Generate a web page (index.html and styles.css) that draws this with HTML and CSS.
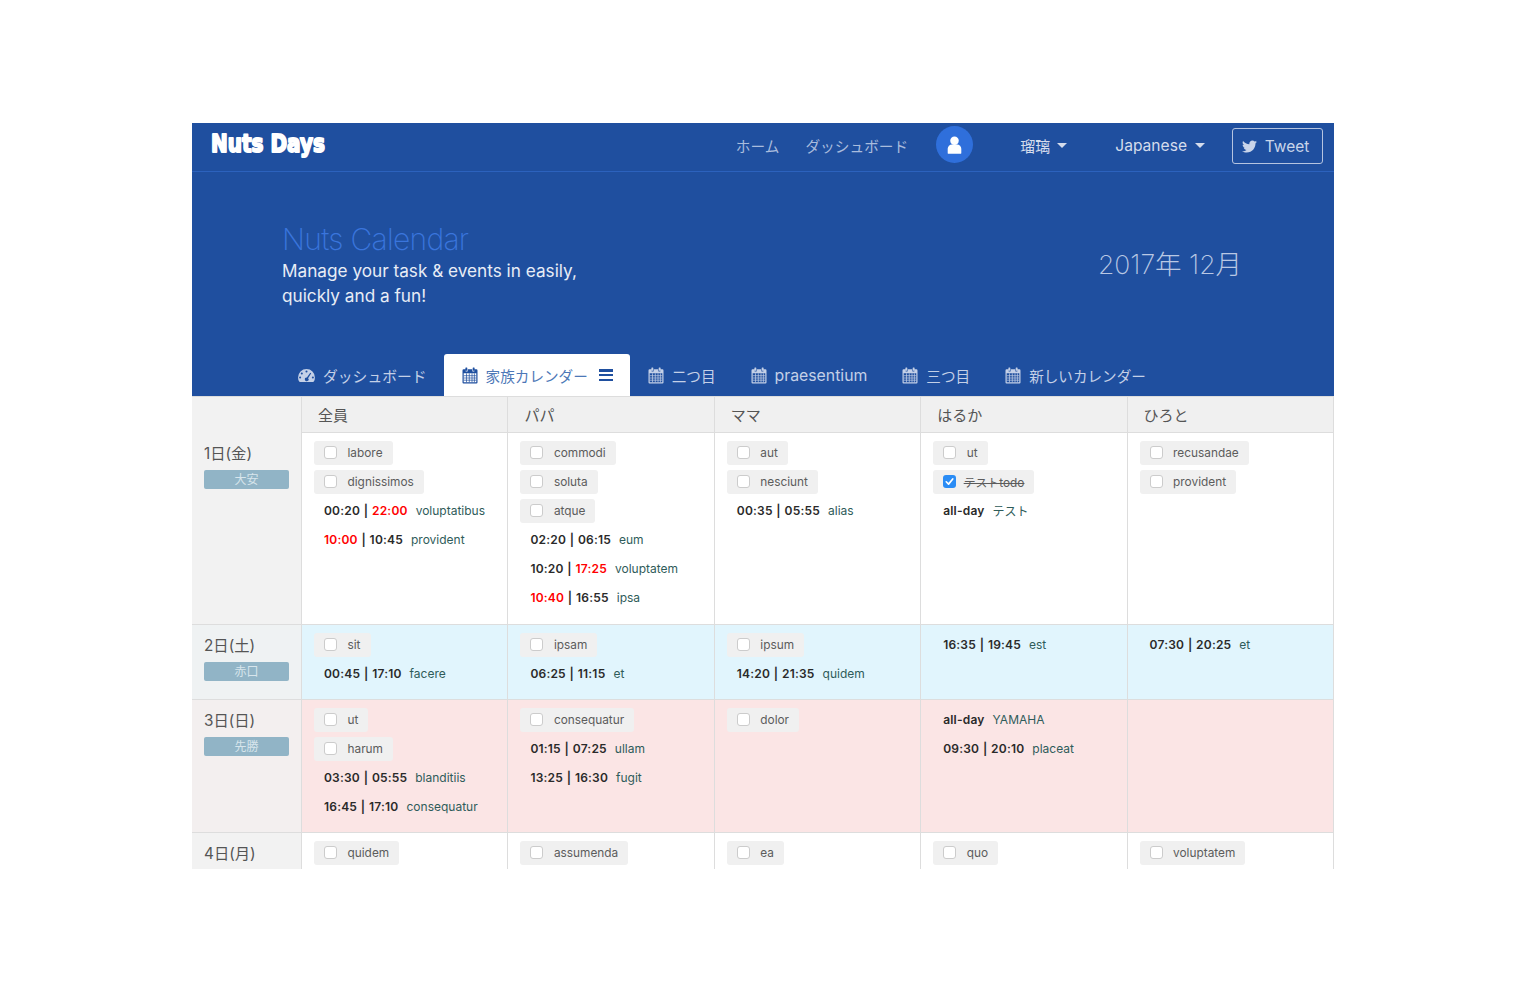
FILE: index.html
```html
<!DOCTYPE html>
<html lang="ja">
<head>
<meta charset="utf-8">
<title>Nuts Days</title>
<link rel="stylesheet" href="styles.css">
</head>
<body>
<svg class="defs" width="0" height="0" aria-hidden="true">
  <symbol id="cal" viewBox="0 0 16 17" preserveAspectRatio="none">
    <path fill="currentColor" fill-rule="evenodd" d="M1.600 2.300H3.400V3.400a1.200 1.200 0 0 0 2.400 0V2.300h4.400V3.400a1.200 1.200 0 0 0 2.400 0V2.300h1.800A1.100 1.100 0 0 1 15.500 3.400V15.400A1.100 1.100 0 0 1 14.400 16.500H1.600A1.100 1.100 0 0 1 .5 15.400V3.400A1.100 1.100 0 0 1 1.600 2.300ZM1.700 6.300V15.300H14.300V6.300ZM3.900.5h.9a.5.500 0 0 1 .5.5V3.300a.5.500 0 0 1-.5.5H3.900a.5.500 0 0 1-.5-.5V1a.5.500 0 0 1 .5-.5ZM11.200.5h.9a.5.500 0 0 1 .5.5V3.300a.5.500 0 0 1-.5.5h-.9a.5.500 0 0 1-.5-.5V1a.5.500 0 0 1 .5-.5Z"/>
    <path fill="none" stroke="currentColor" stroke-width=".7" d="M4.500 6.300V15.300M7.300 6.300V15.300M10 6.300V15.300M12.400 6.300V15.300M1.700 8.700H14.300M1.700 11H14.300M1.700 13.200H14.300"/>
  </symbol>
  <symbol id="check" viewBox="0 0 14 14">
    <path fill="none" stroke="#fff" stroke-width="1.800" stroke-linecap="round" stroke-linejoin="round" d="M3.500 7.300 6 9.800 10.500 4.300"/>
  </symbol>
</svg>
<div class="app">
  <div class="top">
    <nav class="nav">
      <svg class="logo" width="118" height="30" role="img" aria-label="Nuts Days"><text class="logo-text" x="2" y="22" textLength="114" lengthAdjust="spacingAndGlyphs">Nuts Days</text></svg>
      <div class="nav-right">
        <a class="nav-link nav-home">ホーム</a>
        <a class="nav-link nav-dash">ダッシュボード</a>
        <span class="avatar">
          <svg viewBox="0 0 20 22" width="17" height="19"><circle cx="10" cy="6.500" r="5" fill="#fff"/><path fill="#fff" d="M2 21V16a5 5 0 0 1 5-5h6a5 5 0 0 1 5 5v5a1 1 0 0 1-1 1H3a1 1 0 0 1-1-1Z"/></svg>
        </span>
        <a class="nav-menu nav-user">瑠璃<i class="caret"></i></a>
        <a class="nav-menu nav-lang">Japanese<i class="caret"></i></a>
        <a class="tweet">
          <svg viewBox="0 0 512 512" width="15" height="15"><path fill="currentColor" d="M459.370 151.716c.325 4.548.325 9.097.325 13.645 0 138.720-105.583 298.558-298.558 298.558-59.452 0-114.680-17.219-161.137-47.106 8.447.974 16.568 1.299 25.340 1.299 49.055 0 94.213-16.568 130.274-44.832-46.132-.975-84.792-31.188-98.112-72.772 6.498.974 12.995 1.624 19.818 1.624 9.421 0 18.843-1.300 27.614-3.573-48.081-9.747-84.143-51.980-84.143-102.985v-1.299c13.969 7.797 30.214 12.670 47.431 13.319-28.264-18.843-46.781-51.005-46.781-87.391 0-19.492 5.197-37.360 14.294-52.954 51.655 63.675 129.300 105.258 216.365 109.807-1.624-7.797-2.599-15.918-2.599-24.040 0-57.828 46.782-104.934 104.934-104.934 30.213 0 57.502 12.670 76.670 33.137 23.715-4.548 46.456-13.320 66.599-25.340-7.798 24.366-24.366 44.833-46.132 57.827 21.117-2.273 41.584-8.122 60.426-16.243-14.292 20.791-32.161 39.308-52.628 54.253z"/></svg>
          Tweet
        </a>
      </div>
    </nav>
    <header class="hero">
      <div class="hero-copy">
        <h1 class="hero-title">Nuts Calendar</h1>
        <p class="hero-sub">Manage your task &amp; events in easily,<br>quickly and a fun!</p>
      </div>
      <div class="hero-month">2017年 12月</div>
    </header>
    <div class="tabs">
      <a class="tab tab-first">
        <svg class="tab-icon" viewBox="0 0 18 16" width="17" height="15"><path fill="currentColor" fill-rule="evenodd" d="M9 1a9 9 0 0 0-9 9 8.700 8.700 0 0 0 1.200 4.500 1 1 0 0 0 .8.500H16a1 1 0 0 0 .8-.500A8.700 8.700 0 0 0 18 10a9 9 0 0 0-9-9ZM9 2.600a1.100 1.100 0 1 1 0 2.200 1.100 1.100 0 0 1 0-2.200ZM4 4.700a1.100 1.100 0 1 1 0 2.200 1.100 1.100 0 0 1 0-2.200ZM2.200 9a1.100 1.100 0 1 1 0 2.200 1.100 1.100 0 0 1 0-2.200ZM15.800 9a1.100 1.100 0 1 1 0 2.200 1.100 1.100 0 0 1 0-2.200ZM13 5l1 .600-3.300 5.200a2 2 0 1 1-1.300-.7Z"/></svg>
        ダッシュボード
      </a>
      <a class="tab tab-active">
        <svg class="tab-icon" width="16" height="17"><use href="#cal"/></svg>
        家族カレンダー
        <span class="burger"><i></i><i></i><i></i></span>
      </a>
      <a class="tab"><svg class="tab-icon" width="16" height="17"><use href="#cal"/></svg>二つ目</a>
      <a class="tab tab-latin"><svg class="tab-icon" width="16" height="17"><use href="#cal"/></svg>praesentium</a>
      <a class="tab"><svg class="tab-icon" width="16" height="17"><use href="#cal"/></svg>三つ目</a>
      <a class="tab"><svg class="tab-icon" width="16" height="17"><use href="#cal"/></svg>新しいカレンダー</a>
    </div>
  </div>

  <div class="cal">
    <div class="row row-head">
      <div class="cell day-cell"></div>
      <div class="cell">全員</div><div class="cell">パパ</div><div class="cell">ママ</div><div class="cell">はるか</div><div class="cell">ひろと</div>
    </div>

    <div class="row row-1">
      <div class="cell day-cell"><div class="day">1日(金)</div><div class="rokuyo">大安</div></div>
      <div class="cell">
        <label class="todo"><span class="box"></span>labore</label>
        <label class="todo"><span class="box"></span>dignissimos</label>
        <div class="event"><b>00:20 | <em>22:00</em></b><span>voluptatibus</span></div>
        <div class="event"><b><em>10:00</em> | 10:45</b><span>provident</span></div>
      </div>
      <div class="cell">
        <label class="todo"><span class="box"></span>commodi</label>
        <label class="todo"><span class="box"></span>soluta</label>
        <label class="todo"><span class="box"></span>atque</label>
        <div class="event"><b>02:20 | 06:15</b><span>eum</span></div>
        <div class="event"><b>10:20 | <em>17:25</em></b><span>voluptatem</span></div>
        <div class="event"><b><em>10:40</em> | 16:55</b><span>ipsa</span></div>
      </div>
      <div class="cell">
        <label class="todo"><span class="box"></span>aut</label>
        <label class="todo"><span class="box"></span>nesciunt</label>
        <div class="event"><b>00:35 | 05:55</b><span>alias</span></div>
      </div>
      <div class="cell">
        <label class="todo"><span class="box"></span>ut</label>
        <label class="todo todo-done"><span class="box box-on"><svg width="13" height="13"><use href="#check"/></svg></span><s>テストtodo</s></label>
        <div class="event"><b>all-day</b><span>テスト</span></div>
      </div>
      <div class="cell">
        <label class="todo"><span class="box"></span>recusandae</label>
        <label class="todo"><span class="box"></span>provident</label>
      </div>
    </div>

    <div class="row row-sat">
      <div class="cell day-cell"><div class="day">2日(土)</div><div class="rokuyo">赤口</div></div>
      <div class="cell">
        <label class="todo"><span class="box"></span>sit</label>
        <div class="event"><b>00:45 | 17:10</b><span>facere</span></div>
      </div>
      <div class="cell">
        <label class="todo"><span class="box"></span>ipsam</label>
        <div class="event"><b>06:25 | 11:15</b><span>et</span></div>
      </div>
      <div class="cell">
        <label class="todo"><span class="box"></span>ipsum</label>
        <div class="event"><b>14:20 | 21:35</b><span>quidem</span></div>
      </div>
      <div class="cell">
        <div class="event"><b>16:35 | 19:45</b><span>est</span></div>
      </div>
      <div class="cell">
        <div class="event"><b>07:30 | 20:25</b><span>et</span></div>
      </div>
    </div>

    <div class="row row-sun">
      <div class="cell day-cell"><div class="day">3日(日)</div><div class="rokuyo">先勝</div></div>
      <div class="cell">
        <label class="todo"><span class="box"></span>ut</label>
        <label class="todo"><span class="box"></span>harum</label>
        <div class="event"><b>03:30 | 05:55</b><span>blanditiis</span></div>
        <div class="event"><b>16:45 | 17:10</b><span>consequatur</span></div>
      </div>
      <div class="cell">
        <label class="todo"><span class="box"></span>consequatur</label>
        <div class="event"><b>01:15 | 07:25</b><span>ullam</span></div>
        <div class="event"><b>13:25 | 16:30</b><span>fugit</span></div>
      </div>
      <div class="cell">
        <label class="todo"><span class="box"></span>dolor</label>
      </div>
      <div class="cell">
        <div class="event"><b>all-day</b><span>YAMAHA</span></div>
        <div class="event"><b>09:30 | 20:10</b><span>placeat</span></div>
      </div>
      <div class="cell"></div>
    </div>

    <div class="row">
      <div class="cell day-cell"><div class="day">4日(月)</div></div>
      <div class="cell"><label class="todo"><span class="box"></span>quidem</label></div>
      <div class="cell"><label class="todo"><span class="box"></span>assumenda</label></div>
      <div class="cell"><label class="todo"><span class="box"></span>ea</label></div>
      <div class="cell"><label class="todo"><span class="box"></span>quo</label></div>
      <div class="cell"><label class="todo"><span class="box"></span>voluptatem</label></div>
    </div>
  </div>
</div>
</body>
</html>
```
FILE: styles.css
```css
* { box-sizing: border-box; }
html, body { margin: 0; background: #fff; }
body {
  padding: 123px 0 0 192px;
  font-family: Inter, "Noto Sans CJK JP", sans-serif;
  color: #4a4a4a;
}
.defs { position: absolute; }
.app { width: 1142px; height: 746px; overflow: hidden; }

.top { background: #1f4f9f; }
.nav {
  height: 49px;
  border-bottom: 1px solid #2c62bd;
  display: flex;
  align-items: center;
  justify-content: space-between;
  padding: 0 11px 2px 17px;
}
.logo { margin-bottom: 2px; overflow: visible; }
.logo-text {
  font-family: "DejaVu Sans", sans-serif;
  font-weight: 700;
  font-size: 25px;
  fill: #fff;
  stroke: #fff;
  stroke-width: 2px;
  stroke-linejoin: round;
}
.nav-right { display: flex; align-items: center; }
.nav-link { font-size: 14.700px; color: #a9bcdd; margin-bottom: 2px; }
.nav-home { margin-right: 26px; }
.nav-dash { margin-right: 28px; }
.avatar {
  width: 37px;
  height: 37px;
  border-radius: 50%;
  background: #2f6fdb;
  display: flex;
  align-items: center;
  justify-content: center;
  margin-right: 47px;
  margin-bottom: 4px;
}
.nav-menu { display: flex; align-items: center; font-size: 15px; color: #d4dcec; margin-bottom: 2px; }
.nav-user { margin-right: 48px; }
.nav-lang { margin-right: 27px; font-size: 15.600px; }
.caret {
  width: 0; height: 0;
  margin-left: 7px;
  border: 5px solid transparent;
  border-top: 5px solid #d4dcec;
  border-bottom: 0;
}
.nav-lang .caret { margin-left: 8px; }
.tweet {
  width: 91px;
  height: 36px;
  border: 1px solid #b5c4e0;
  border-radius: 3px;
  display: flex;
  align-items: center;
  justify-content: center;
  gap: 8px;
  padding-right: 4px;
  font-size: 15.500px;
  color: #c9d5ea;
}
.hero {
  height: 182px;
  display: flex;
  align-items: center;
  justify-content: space-between;
  padding: 0 92px 0 90px;
}
.hero-copy { padding-top: 2px; }
.hero-title {
  margin: 0;
  font-size: 30px;
  line-height: 38px;
  font-weight: 200;
  letter-spacing: -.7px;
  color: #3a75dc;
}
.hero-sub {
  margin: 0;
  font-size: 17.200px;
  line-height: 25px;
  color: #e8edf6;
}
.hero-month { margin-bottom: 2px; font-size: 26.500px; font-weight: 200; color: #b9c8e4; }

.tabs {
  height: 42px;
  display: flex;
  align-items: flex-end;
  padding-left: 88.500px;
}
.tab {
  height: 42px;
  padding: 0 17.500px;
  display: flex;
  align-items: center;
  gap: 8px;
  font-size: 14.600px;
  color: #c4d0e7;
  border-radius: 3px 3px 0 0;
}
.tab-first { font-size: 14.800px; }
.tab-latin { padding-top: 1px; font-size: 15.800px; }
.tab-icon { flex: none; }
.tab-active { background: #fff; color: #4d78b7; }
.tab-active .tab-icon { color: #1f4f9f; }
.burger { display: flex; flex-direction: column; gap: 2.250px; margin-left: 3px; }
.burger i { display: block; width: 14px; height: 2.500px; background: #1f4f9f; }

.cal { border-top: 1px solid #ddd; }
.row {
  display: grid;
  grid-template-columns: 110px repeat(5, 1fr);
  border-bottom: 1px solid #ddd;
}
.cell {
  padding: 8px 12px;
  border-right: 1px solid #ddd;
  min-width: 0;
}
.row-head { height: 36px; background: #f0f0f0; }
.row-head .cell { padding: 1px 16px 0; font-size: 15px; line-height: 36px; color: #555; }
.row-1 { height: 192px; }
.row-sat { background: #e1f5fd; }
.row-sun { background: #fbe5e5; }
.day-cell { background: #f2f2f2; }
.row-sat .day-cell { background: #eff2f3; }
.row-sun .day-cell { background: #f3efef; }
.day { padding-top: 1px; font-size: 15.300px; line-height: 24px; color: #555; }
.rokuyo {
  margin-top: 4px;
  height: 19px;
  border-radius: 2px;
  background: #91b4c6;
  color: #d7e5ec;
  font-size: 12px;
  line-height: 19px;
  text-align: center;
}
.todo {
  display: flex;
  width: fit-content;
  align-items: center;
  height: 24px;
  margin-bottom: 5px;
  padding: 0 10px 1px;
  border-radius: 3px;
  background: #f0f0f0;
  font-size: 11.850px;
  color: #5c5c5c;
}
.box {
  width: 13px;
  height: 13px;
  margin-right: 10.500px;
  border: 1px solid #ccc;
  border-radius: 3px;
  background: #fff;
  flex: none;
}
.box-on { background: #2a8cf5; border: 0; display: flex; margin-right: 7.500px; }
.event {
  height: 24px;
  margin-bottom: 5px;
  padding: 0 0 1px 10px;
  display: flex;
  align-items: center;
  font-size: 12px;
  white-space: nowrap;
}
.event b { font-weight: 600; letter-spacing: .2px; word-spacing: .5px; color: #2a2a2a; margin-right: 8px; }
.event em { font-style: normal; color: #f00; }
.event span { color: #2f5c5a; }
```
